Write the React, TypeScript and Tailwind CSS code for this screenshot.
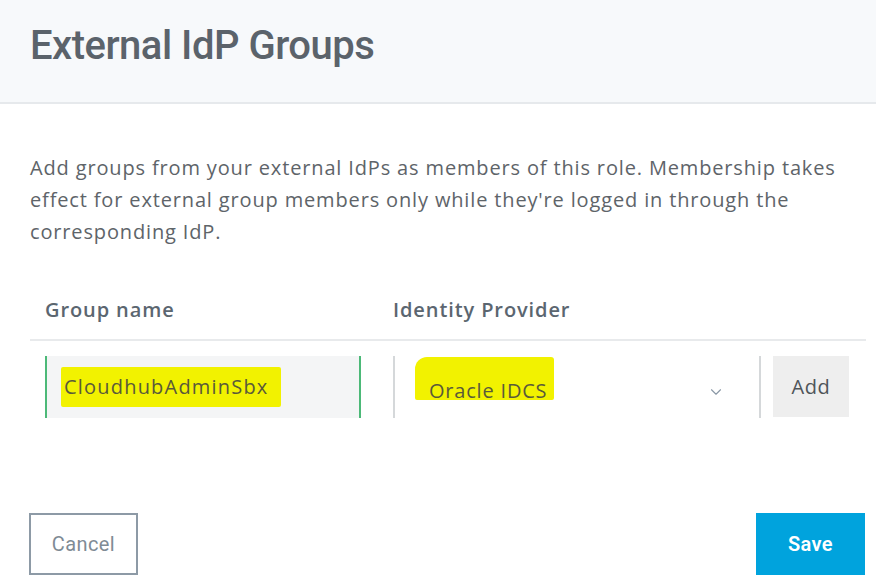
import { ChevronDown } from 'lucide-react'

const body = { fontFamily: '"Open Sans", "Noto Sans", sans-serif' }

export default function App() {
  return (
    <div className="w-[876px] h-[582px] bg-white overflow-hidden flex flex-col" style={body}>
      {/* Header */}
      <div className="h-[104px] shrink-0 bg-[#f7f9fb] border-b-2 border-[#e6e9ec] flex items-center pl-[30px] pb-[10px]">
        <h1
          className="text-[40px] text-[#5b636b] font-medium tracking-[-0.5px]"
          style={{ fontFamily: 'Roboto, "Liberation Sans", sans-serif' }}
        >
          External IdP Groups
        </h1>
      </div>

      {/* Body */}
      <div className="px-[30px] pt-[48px]">
        <p className="text-[20px] leading-[32px] tracking-[0.85px] text-[#5e6469] -mr-[8px]">
          Add groups from your external IdPs as members of this role. Membership takes effect for external group members only while they're logged in through the corresponding IdP.
        </p>

        <div className="mt-[32px] -mr-[20px] flex h-[61px] items-center border-b-2 border-[#e8eaec] text-[20px] tracking-[0.9px] font-semibold text-[#5b6670]">
          <div className="pl-[15px] w-[363px] shrink-0">Group name</div>
          <div>Identity Provider</div>
        </div>

        <div className="mt-[15px] flex h-[62px]">
          <div className="shrink-0 ml-[15px] w-[316px] bg-[#f4f5f6] border-x-2 border-[#4cb978] flex items-center pl-[17px]">
            <span className="relative text-[20px] tracking-[1.2px] text-[#5a5a3a]">
              <span className="absolute -left-[3px] -right-[12px] top-[-5px] bottom-[-5px] bg-[#f2f200] rounded-[2px]" />
              <span className="relative">CloudhubAdminSbx</span>
            </span>
          </div>

          <div className="shrink-0 ml-[32px] w-[368px] border-l-2 border-r-2 border-[#d5d8da] flex items-center pl-[34px] pr-[34px] relative">
            <span className="absolute left-[20px] top-[1px] w-[139px] h-[43px] bg-[#f2f200] rounded-tl-[12px] rounded-tr-[3px] rounded-b-[2px]" />
            <span className="relative text-[20px] tracking-[0.8px] text-[#5a5a3a] pt-[8px]">Oracle IDCS</span>
            <ChevronDown size={18} strokeWidth={1.5} className="relative ml-auto mt-[10px] text-[#8a98a6]" />
          </div>

          <button className="shrink-0 ml-[12px] w-[76px] h-[61px] bg-[#eeeeee] text-[20px] tracking-[0.6px] text-[#4f5559]">
            Add
          </button>
        </div>
      </div>

      {/* Footer */}
      <div className="mt-auto mb-[7px] flex items-center justify-between pl-[29px] pr-[11px]">
        <button
          className="w-[109px] h-[62px] border-2 border-[#8d9aa6] text-[20px] text-[#7f8b95] tracking-[0.4px]"
          style={{ fontFamily: 'Roboto, "Open Sans", sans-serif' }}
        >
          Cancel
        </button>
        <button
          className="w-[109px] h-[62px] bg-[#00a3dd] text-[20px] font-semibold text-white tracking-[0.4px]"
          style={{ fontFamily: 'Roboto, "Open Sans", sans-serif' }}
        >
          Save
        </button>
      </div>
    </div>
  )
}
